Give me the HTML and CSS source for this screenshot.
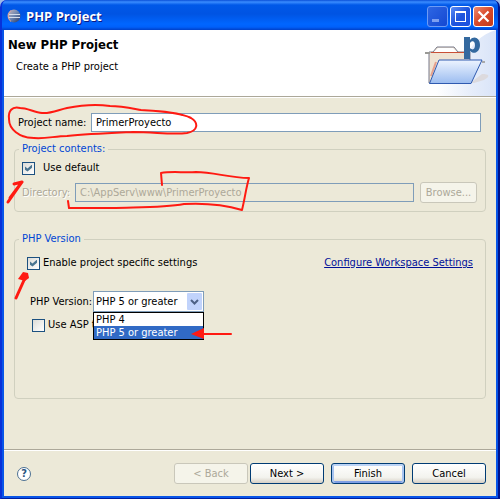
FILE: index.html
```html
<!DOCTYPE html>
<html lang="en">
<head>
    <meta charset="UTF-8">
    <meta name="viewport" content="width=device-width, initial-scale=1.0">
    <title>PHP Project</title>
    <link rel="stylesheet" href="styles.css">
</head>
<body>
    <div class="window">
        <header class="title-bar">
            <svg class="app-icon" width="14" height="14" viewBox="0 0 14 14" aria-hidden="true">
                <defs>
                    <linearGradient id="globe" x1="0" y1="0" x2="1" y2="1">
                        <stop offset="0" stop-color="#d0b8b8"/>
                        <stop offset="0.500" stop-color="#6c86b0"/>
                        <stop offset="1" stop-color="#27335e"/>
                    </linearGradient>
                </defs>
                <circle cx="7" cy="7" r="6.500" fill="url(#globe)"/>
                <path d="M2 5.500h11M1 8.500h12" stroke="#d5deed" stroke-width="1"/>
                <path d="M4 1.500C0.500 4 0.500 10 4 12.500" fill="none" stroke="#e5a59b" stroke-width="1"/>
            </svg>
            <span class="title">PHP Project</span>
            <div class="window-buttons">
                <button type="button" class="win-btn minimize" aria-label="Minimize" disabled>
                    <svg width="19" height="19" viewBox="0 0 19 19"><path d="M4 12h7v3H4z" fill="#7d9ff0"/></svg>
                </button>
                <button type="button" class="win-btn" aria-label="Maximize">
                    <svg width="19" height="19" viewBox="0 0 19 19"><path d="M4 4h11v11H4zM5 6v8h9V6z" fill="#fff" fill-rule="evenodd"/></svg>
                </button>
                <button type="button" class="win-btn close" aria-label="Close">
                    <svg width="19" height="19" viewBox="0 0 19 19"><path d="M4.500 4.500l10 10M14.500 4.500l-10 10" stroke="#fff" stroke-width="2.200"/></svg>
                </button>
            </div>
        </header>

        <section class="banner">
            <div class="banner-text">
                <h1>New PHP Project</h1>
                <p>Create a PHP project</p>
            </div>
            <svg class="banner-art" width="76" height="66" viewBox="0 0 76 66" aria-hidden="true">
                <defs>
                    <linearGradient id="glow" x1="0" y1="0" x2="1" y2="0">
                        <stop offset="0" stop-color="#fff"/>
                        <stop offset="0.600" stop-color="#e6edfa"/>
                        <stop offset="1" stop-color="#d9e4f8"/>
                    </linearGradient>
                    <linearGradient id="folder" x1="0" y1="0" x2="0" y2="1">
                        <stop offset="0" stop-color="#edf4ff"/>
                        <stop offset="1" stop-color="#9bbcf0"/>
                    </linearGradient>
                </defs>
                <path d="M76 0C60 5 52 14 44 30L16 54V66H76z" fill="url(#glow)"/>
                <path d="M50 53L62 44C69 44 71 46 64 50L54 53z" fill="#dcdade"/>
                <path d="M9 53V22H13L17 17H34L38 22H50V53z" fill="#efe3d3" stroke="#76798a"/>
                <path d="M14 22L18 18H33L37 22z" fill="#fff"/>
                <path d="M11 22.500H48" stroke="#c94f37"/>
                <path d="M5 22h5v2H5z" fill="#9a9a96"/>
                <path d="M11 46L16 32" stroke="#e5a08d" stroke-width="2"/>
                <path d="M44 7H50V10C54 5 60 8 60 15C60 22 54 25 50 21V29H44zM50 13V18C53 21 55 19 55 15C55 11 52 10 50 13z" fill="#34699f" fill-rule="evenodd"/>
                <path d="M19 30H62L51 53.500H9.500z" fill="url(#folder)" stroke="#2f5ab0"/>
                <path d="M62 31h3v2h-3z" fill="#aaa"/>
            </svg>
        </section>

        <form class="wizard">
            <main class="page">
                <div class="name-row">
                    <label for="name">Project name:</label>
                    <input type="text" id="name" value="PrimerProyecto">
                </div>

                <fieldset class="contents">
                    <legend>Project contents:</legend>
                    <div class="check-row default-row">
                        <input type="checkbox" id="use-default" checked>
                        <label for="use-default">Use default</label>
                    </div>
                    <div class="directory-row">
                        <label for="directory">Directory:</label>
                        <input type="text" id="directory" value="C:\AppServ\www\PrimerProyecto" disabled>
                        <button type="button" class="browse" disabled>Browse...</button>
                    </div>
                </fieldset>

                <fieldset class="version">
                    <legend>PHP Version</legend>
                    <div class="settings-row">
                        <div class="check-row">
                            <input type="checkbox" id="specific" checked>
                            <label for="specific">Enable project specific settings</label>
                        </div>
                        <a href="#">Configure Workspace Settings</a>
                    </div>
                    <div class="version-row">
                        <label for="php-version">PHP Version:</label>
                        <div class="combo">
                            <select id="php-version">
                                <option>PHP 4</option>
                                <option selected>PHP 5 or greater</option>
                            </select>
                            <svg class="combo-arrow" width="15" height="17" viewBox="0 0 15 17" aria-hidden="true">
                                <rect width="15" height="17" rx="1" fill="#c1d3fb"/>
                                <path d="M4 7l3.500 3.500L11 7" fill="none" stroke="#4d6185" stroke-width="2"/>
                            </svg>
                            <ul class="combo-list">
                                <li>PHP 4</li>
                                <li class="selected">PHP 5 or greater</li>
                            </ul>
                        </div>
                    </div>
                    <div class="check-row asp-row">
                        <input type="checkbox" id="asp">
                        <label for="asp">Use ASP t</label>
                    </div>
                </fieldset>
            </main>

            <footer class="button-bar">
                <button type="button" class="help" aria-label="Help">?</button>
                <div class="nav-buttons">
                    <button type="button" disabled>&lt; Back</button>
                    <button type="button">Next &gt;</button>
                </div>
                <button type="submit" class="default">Finish</button>
                <button type="button">Cancel</button>
            </footer>
        </form>

        <!-- Red pen marks drawn over the dialog -->
        <svg class="marks" width="260" height="350" viewBox="0 0 260 350" aria-hidden="true">
            <g fill="none" stroke="#ff1a12" stroke-width="2" stroke-linecap="round" stroke-linejoin="round">
                <path d="M20 108C12 106 8 111 9 119C9 129 19 138 34 138C46 139 55 136 67 136C88 134 112 133 133 132C155 132 172 135 187 133C198 131 199 123 191 118C180 112 157 111 141 110C130 108 121 106 110 106C96 104 82 105 67 108C58 110 50 114 42 113C34 112 27 108 20 108"/>
                <path d="M162 185L161 173C172 171 184 173 196 172C214 172 229 178 249 178C246 188 245 198 242 210C222 204 202 203 184 204C163 208 136 207 112 208H69L68 201"/>
                <path d="M8 202L22 182L14 184M10 198L22 182" stroke-width="3"/>
                <path d="M16 298L25 278" stroke-width="3"/>
                <path d="M198 334H231"/>
            </g>
            <path d="M18 279L23 272L28 273L29 278L25 281z" fill="#ff1a12"/>
            <path d="M191 334L204 328V339z" fill="#ff1a12"/>
        </svg>
    </div>
</body>
</html>
```

FILE: styles.css
```css
* {
    box-sizing: border-box;
}

body {
    margin: 0;
    background-color: #9db9e8;
    color: #000;
    font-family: "DejaVu Sans Condensed", Tahoma, "DejaVu Sans", sans-serif;
    font-size: 11px;
    line-height: 14px;
}

h1,
p,
ul {
    margin: 0;
    padding: 0;
}

button,
input,
select {
    margin: 0;
    font: inherit;
    color: inherit;
}

/* Window frame */
.window {
    position: relative;
    display: flex;
    flex-direction: column;
    min-height: 100vh;
    padding: 0 2px 2px;
    border: solid;
    border-width: 0 2px 1px;
    border-color: #0831d9 #00138c #001ea0 #0831d9;
    border-radius: 7px 7px 0 0;
    overflow: hidden;
    background-color: #0855e8;
}

/* Title bar */
.title-bar {
    display: flex;
    align-items: center;
    height: 30px;
    margin: 0 -2px;
    padding: 2px 4px 0 5px;
    background: linear-gradient(#0a4fd8 0, #3a8cff 2px, #0058e8 5px, #0054e3 14px, #0066ff 24px, #0060fa 27px, #0040c8 30px);
}

.title {
    flex: 1;
    margin-left: 5px;
    color: #fff;
    font-family: "Open Sans", "Trebuchet MS", sans-serif;
    font-size: 13px;
    font-weight: bold;
    text-shadow: 1px 1px #0a1883;
}

.window-buttons {
    display: flex;
    gap: 2px;
}

.win-btn {
    width: 21px;
    height: 21px;
    padding: 0;
    border: 1px solid #fff;
    border-radius: 3px;
    background: linear-gradient(135deg, #5a8cf5, #1f55dd 50%, #1c50e0);
}

.win-btn svg {
    display: block;
}

.win-btn.minimize {
    border-color: #6d9bf5;
    background: linear-gradient(135deg, #2d66e4, #1448d2);
}

.win-btn.close {
    background: linear-gradient(135deg, #ee8c70, #d8482a 50%, #c43a1a);
}

/* White heading area */
.banner {
    display: flex;
    justify-content: space-between;
    height: 67px;
    border-bottom: 1px solid #aca899;
    background-color: #fff;
}

.banner-text {
    padding: 7px 4px;
}

.banner h1 {
    font-size: 13px;
    line-height: 16px;
}

.banner p {
    margin: 7px 0 0 8px;
}

/* Form */
.wizard {
    flex: 1;
    display: flex;
    flex-direction: column;
    border-top: 1px solid #fff;
    background-color: #ece9d8;
}

.page {
    flex: 1;
    padding: 15px 10px 0;
}

.name-row,
.directory-row,
.settings-row,
.version-row,
.check-row {
    display: flex;
    align-items: center;
}

.name-row {
    padding: 0 5px 0 4px;
}

.name-row label {
    width: 73px;
    white-space: nowrap;
}

input[type="text"] {
    flex: 1;
    min-width: 0;
    height: 19px;
    padding: 0 4px;
    border: 1px solid #7f9db9;
    background-color: #fff;
}

input[type="text"]:disabled {
    background-color: #ece9d8;
    color: #aca899;
}

input[type="checkbox"] {
    appearance: none;
    width: 13px;
    height: 13px;
    border: 1px solid #1c5180;
    background: linear-gradient(135deg, #dcdcd7, #fff);
}

input[type="checkbox"]:checked::after {
    content: "";
    display: block;
    width: 7px;
    height: 7px;
    margin: 2px;
    background-color: #4a7590;
    clip-path: polygon(0 28%, 36% 58%, 100% 0, 100% 46%, 36% 100%, 0 74%);
}

fieldset {
    min-width: 0;
    margin: 0;
    border: 1px solid #d0d0bf;
    border-radius: 4px;
}

legend {
    margin-left: -1px;
    padding: 0 3px;
    color: #0046d5;
}

.contents {
    margin-top: 10px;
    padding: 5px 8px 8px 5px;
}

.contents .check-row,
.directory-row {
    padding-left: 2px;
}

.default-row {
    gap: 8px;
}

.directory-row {
    margin-top: 7px;
}

.directory-row label {
    width: 53px;
    color: #aca899;
    text-shadow: 1px 1px #fff;
    white-space: nowrap;
}

.version {
    min-height: 167px;
    margin-top: 20px;
    padding: 10px 12px 0 5px;
}

.settings-row {
    justify-content: space-between;
    padding-left: 7px;
}

.settings-row .check-row,
.asp-row {
    gap: 3px;
}

.settings-row a {
    color: #000f99;
}

.version-row {
    margin-top: 21px;
    padding-left: 10px;
}

.version-row label {
    width: 63px;
    white-space: nowrap;
}

/* Drop-down with its open list */
.combo {
    position: relative;
    width: 111px;
}

.combo select {
    appearance: none;
    display: block;
    width: 100%;
    height: 21px;
    padding: 0 2px;
    border: 1px solid #7f9db9;
    border-radius: 0;
    background-color: #fff;
}

.combo-arrow {
    position: absolute;
    top: 2px;
    right: 2px;
}

.combo-list {
    position: absolute;
    top: 100%;
    left: 0;
    width: 100%;
    border: 1px solid #000;
    background-color: #fff;
    list-style: none;
    line-height: 13px;
    z-index: 1;
}

.combo-list li {
    padding-left: 2px;
}

.combo-list .selected {
    background-color: #316ac5;
    color: #fff;
}

.asp-row {
    margin-top: 6px;
    padding-left: 12px;
}

/* Bottom buttons */
.button-bar {
    display: flex;
    align-items: center;
    gap: 7px;
    padding: 13px 10px 12px;
    border-top: 1px solid #aca899;
    box-shadow: inset 0 1px #fff;
}

.nav-buttons {
    display: flex;
    gap: 2px;
    margin-left: auto;
}

.button-bar button,
.browse {
    width: 74px;
    height: 21px;
    padding: 0;
    border: 1px solid #003c74;
    border-radius: 3px;
    background: linear-gradient(#fff, #f3f3ee 70%, #d6d0c5);
}

.button-bar button:disabled,
.browse:disabled {
    border-color: #c9c7ba;
    background: #f5f4ea;
    color: #aca899;
}

.button-bar .default {
    box-shadow: inset 0 2px #bcd4f6, inset 2px 0 #a8c4f0, inset -2px 0 #a8c4f0, inset 0 -2px #7f9fe4;
}

.browse {
    width: 57px;
    margin-left: 6px;
}

.button-bar .help {
    width: 14px;
    height: 14px;
    margin-left: 3px;
    border-color: #4d7092;
    border-radius: 50%;
    background: #fff;
    color: #2a5480;
    font-weight: bold;
    line-height: 12px;
}

.marks {
    position: absolute;
    top: 0;
    left: -2px;
    z-index: 2;
    pointer-events: none;
}
```
